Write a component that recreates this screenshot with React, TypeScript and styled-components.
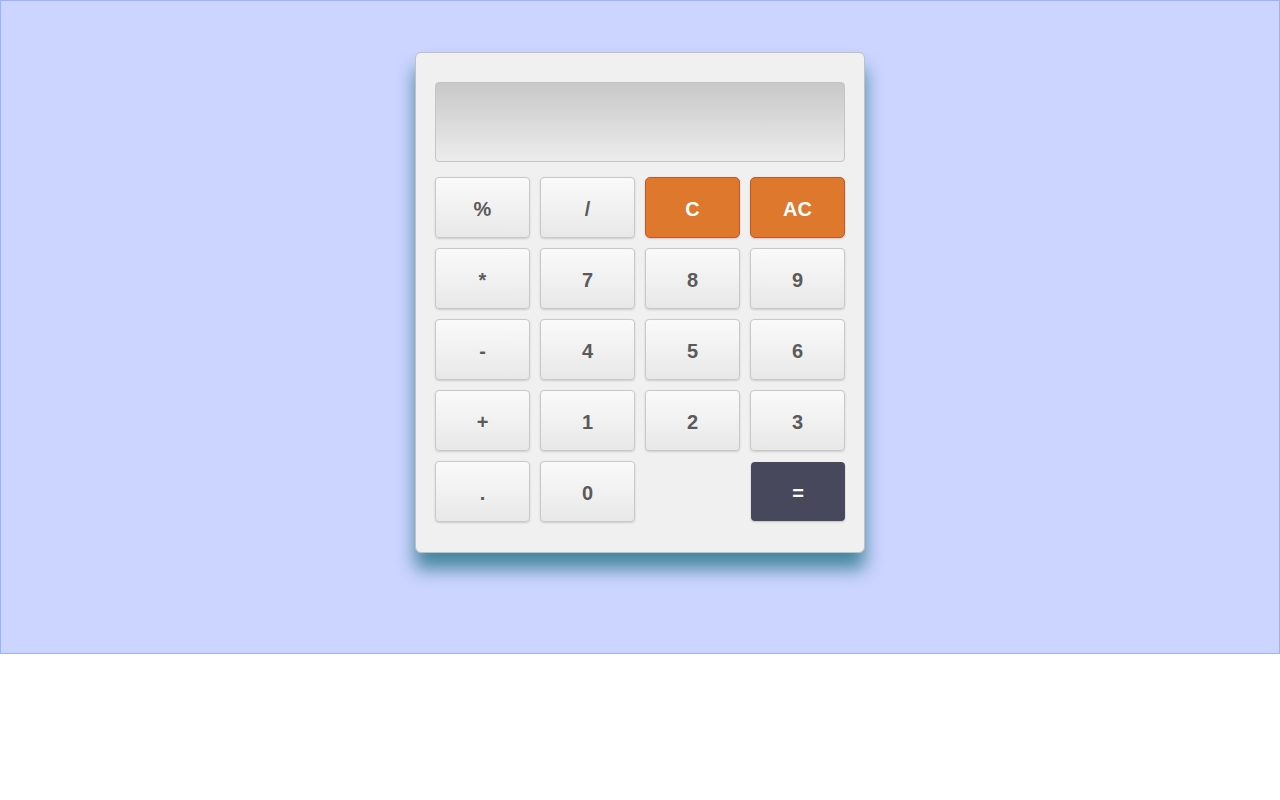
import React from "react";
import styled, { createGlobalStyle, css } from "styled-components";

const Global = createGlobalStyle`
  html, body { margin: 0; padding: 0; background: #fff; }
  body { font-family: "Liberation Sans", Arial, sans-serif; }
`;

const Stage = styled.div`
  border: 1px solid #9fb0ff;
  background: #ccd5ff;
  display: flex;
  justify-content: center;
  align-items: flex-start;
  padding-top: 51px;
  box-sizing: border-box;
  height: 654px;
`;

const Body = styled.div`
  width: 450px;
  height: 501px;
  box-sizing: border-box;
  background: #f0f0f0;
  border: 1px solid #c0c0c0;
  border-radius: 6px;
  padding: 29px 19px 0 19px;
  box-shadow: 0 16px 18px rgba(35, 115, 135, 0.8);
  display: flex;
  flex-direction: column;
`;

const Display = styled.div`
  height: 80px;
  box-sizing: border-box;
  border: 1px solid #c4c4c4;
  border-radius: 4px;
  background: linear-gradient(to bottom, #c8c8c8, #ececec);
`;

const Keys = styled.div`
  margin-top: 15px;
  display: grid;
  grid-template-columns: repeat(4, 95px);
  grid-auto-rows: 61px;
  column-gap: 10px;
  row-gap: 10px;
`;

type Variant = "plain" | "orange" | "dark";

const Key = styled.button<{ $v: Variant }>`
  box-sizing: border-box;
  width: 95px;
  height: 61px;
  border-radius: 4px;
  font-family: "Liberation Sans", Arial, sans-serif;
  font-weight: bold;
  font-size: 20px;
  padding: 4px 0 0 0;
  display: flex;
  align-items: center;
  justify-content: center;
  cursor: pointer;
  ${(p) =>
    p.$v === "plain" &&
    css`
      border: 1px solid #c8c8c8;
      background: linear-gradient(to bottom, #fafafa, #e8e8e8);
      color: #5a5a5a;
      box-shadow: 0 1px 2px rgba(0, 0, 0, 0.15);
    `}
  ${(p) =>
    p.$v === "orange" &&
    css`
      border: 1px solid #c8552a;
      border-radius: 5px;
      background: #dd782c;
      color: #ffffff;
      box-shadow: 0 1px 2px rgba(0, 0, 0, 0.15);
    `}
  ${(p) =>
    p.$v === "dark" &&
    css`
      border: none;
      width: 94px;
      height: 59px;
      margin: 1px 0 0 1px;
      background: #48485c;
      color: #ffffff;
      box-shadow: 0 1px 2px rgba(0, 0, 0, 0.2);
    `}
`;

const Spacer = styled.div``;

const keys: { l: string; v: Variant }[][] = [
  [
    { l: "%", v: "plain" },
    { l: "/", v: "plain" },
    { l: "C", v: "orange" },
    { l: "AC", v: "orange" },
  ],
  [
    { l: "*", v: "plain" },
    { l: "7", v: "plain" },
    { l: "8", v: "plain" },
    { l: "9", v: "plain" },
  ],
  [
    { l: "-", v: "plain" },
    { l: "4", v: "plain" },
    { l: "5", v: "plain" },
    { l: "6", v: "plain" },
  ],
  [
    { l: "+", v: "plain" },
    { l: "1", v: "plain" },
    { l: "2", v: "plain" },
    { l: "3", v: "plain" },
  ],
];

export default function App() {
  return (
    <>
      <Global />
      <Stage>
        <Body>
          <Display />
          <Keys>
            {keys.flat().map((k, i) => (
              <Key key={i} $v={k.v}>
                {k.l}
              </Key>
            ))}
            <Key $v="plain">.</Key>
            <Key $v="plain">0</Key>
            <Spacer />
            <Key $v="dark">=</Key>
          </Keys>
        </Body>
      </Stage>
    </>
  );
}
